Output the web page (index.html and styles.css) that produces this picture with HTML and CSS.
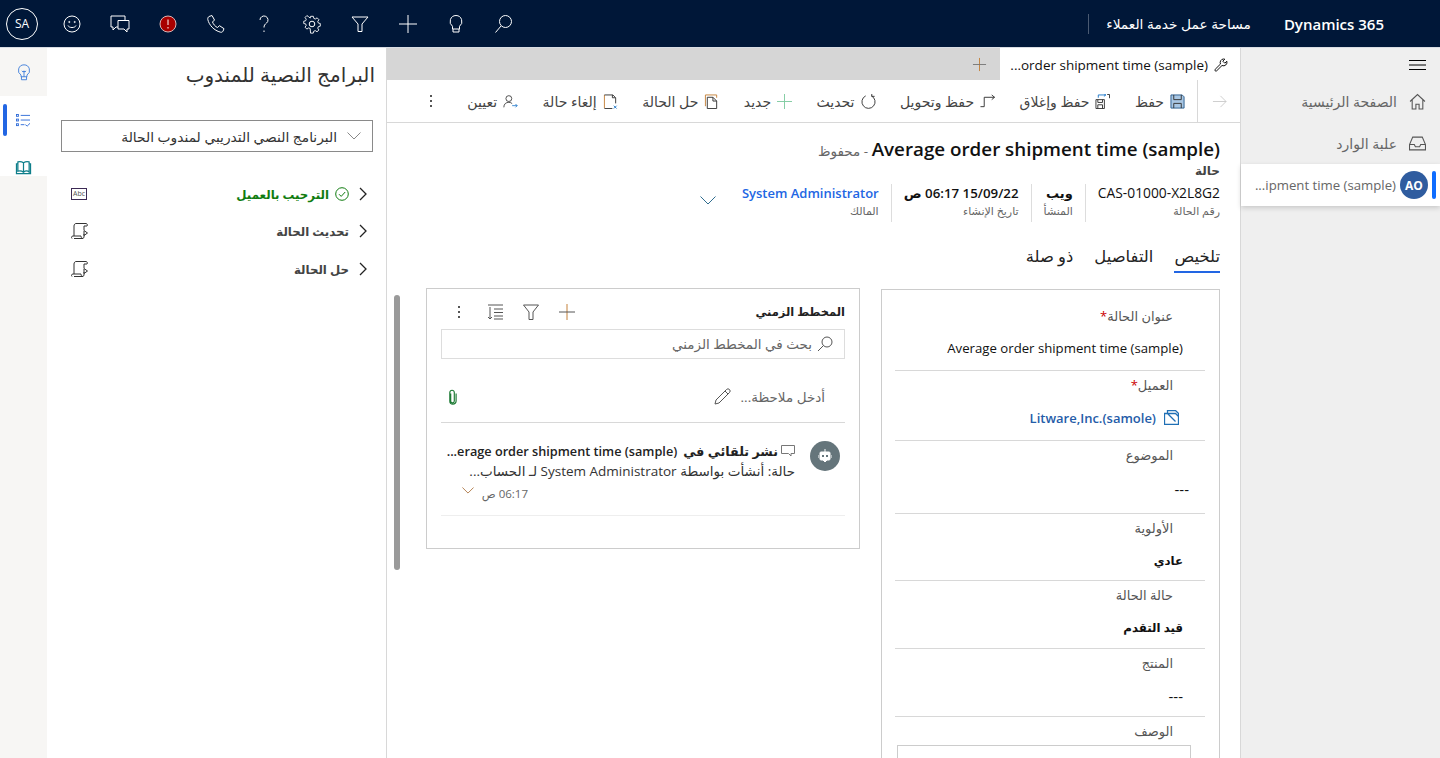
FILE: index.html
```html
<!DOCTYPE html>
<html lang="ar" dir="rtl">
<head>
    <meta charset="UTF-8">
    <title>Dynamics 365</title>
    <link rel="stylesheet" href="styles.css">
</head>
<body>
    <header class="topbar">
        <div class="brand">
            <svg class="waffle" viewBox="0 0 16 16" fill="#fff"><rect x="0" y="0" width="3" height="3"/><rect x="6.5" y="0" width="3" height="3"/><rect x="13" y="0" width="3" height="3"/><rect x="0" y="6.5" width="3" height="3"/><rect x="6.5" y="6.5" width="3" height="3"/><rect x="13" y="6.5" width="3" height="3"/><rect x="0" y="13" width="3" height="3"/><rect x="6.5" y="13" width="3" height="3"/><rect x="13" y="13" width="3" height="3"/></svg>
            <span class="brand-name" dir="ltr">Dynamics 365</span>
            <span class="brand-app">مساحة عمل خدمة العملاء</span>
        </div>
        <div class="top-icons">
            <button class="top-btn"><svg viewBox="0 0 20 20"><circle cx="11.5" cy="7.5" r="6"/><path d="M7 12 1.500 18.500"/></svg></button>
            <button class="top-btn"><svg viewBox="0 0 20 20"><path d="M10 1.500a6 6 0 0 0-3.500 10.800V15h7v-2.700A6 6 0 0 0 10 1.500zM7 15v3h6v-3"/></svg></button>
            <button class="top-btn"><svg viewBox="0 0 20 20"><path d="M10 1v18M1 10h18"/></svg></button>
            <button class="top-btn"><svg viewBox="0 0 20 20"><path d="M2 3h16l-6 7v7.500H8V10z"/></svg></button>
            <button class="top-btn"><svg viewBox="0 0 20 20"><circle cx="10" cy="10" r="2.800"/><path d="M8.500 2h3l.5 2.300 1.700.7 2-1.300 2 2.100-1.300 2 .7 1.700 2.100.5v3l-2.100.5-.7 1.700 1.300 2-2.100 2-2-1.300-1.700.7-.5 2.100h-3L8 15.600l-1.700-.7-2 1.300-2-2.100 1.300-2-.7-1.700L.8 10V7.500l2.100-.5.7-1.700-1.300-2 2-2.100 2 1.300L8 4z" transform="translate(1 .5) scale(.9)"/></svg></button>
            <button class="top-btn"><svg viewBox="0 0 20 20"><path d="M6 6a4 4 0 1 1 6.500 3.100c-1.500 1.200-2.500 2-2.500 4.400M10 16.500v1.500"/></svg></button>
            <button class="top-btn"><svg viewBox="0 0 20 20"><path d="M3 2.500 6 1.500l2.500 4.500-2 2c.7 2 2.800 4.700 5 5.500l2-1.800 4.500 3-1 2.500c-.5.800-1.500 1.300-2.500 1C8 16.500 3 11 1.800 5.500c-.2-1.300.3-2.400 1.200-3z"/></svg></button>
            <button class="top-btn"><svg viewBox="0 0 20 20"><circle class="alert-dot" cx="10" cy="10" r="8"/><path class="alert-mark" d="M10 5.500v5.500M10 13v1.500"/></svg></button>
            <button class="top-btn"><svg viewBox="0 0 20 20"><path d="M15 6V2H1v11h2v3l3-3h2M8 6.500h11V15h-2v3l-3-3H8z"/></svg></button>
            <button class="top-btn"><svg viewBox="0 0 20 20"><circle cx="10" cy="10" r="8"/><circle cx="7.300" cy="8" r=".6"/><circle cx="12.700" cy="8" r=".6"/><path d="M6 11.500c1 2.700 7 2.700 8 0"/></svg></button>
            <div class="me">SA</div>
        </div>
    </header>

    <div class="shell">
        <nav class="sitemap">
            <div class="hamburger"><svg viewBox="0 0 17 10"><path d="M0 .5h17M0 5h17M0 9.500h17"/></svg></div>
            <a class="site-item"><svg class="site-ico" viewBox="0 0 16 16"><path d="M1 8 8 1.500 15 8M3 6.500V15h3.500v-4.500h3V15H13V6.500"/></svg>الصفحة الرئيسية</a>
            <a class="site-item"><svg class="site-ico" viewBox="0 0 16 16"><path d="M3.500 2h9L15.500 9v5h-15V9zM.5 9h4.500l1 2h4l1-2h4.500"/></svg>علبة الوارد</a>
            <a class="site-item site-active"><span class="avatar">AO</span><span class="site-latin" dir="ltr">...ipment time (sample)</span></a>
        </nav>

        <main class="record">
            <div class="tabstrip">
                <div class="session-tab">
                    <svg class="wrench" viewBox="0 0 14 14"><path d="M9.500 1a3.500 3.500 0 0 0-3 5L1.200 11.300a1 1 0 0 0 1.500 1.500L8 7.500a3.500 3.500 0 0 0 4.800-4.300l-2 2-2-2 2-2c-.4-.1-.8-.2-1.300-.2z"/></svg>
                    <span dir="ltr">...order shipment time (sample)</span>
                </div>
                <svg class="tab-plus" viewBox="0 0 16 16"><path class="st-orange" d="M8 1v14"/><path d="M1 8h14"/></svg>
            </div>

            <div class="commandbar">
                <div class="cmd-back"><svg viewBox="0 0 16 16"><path d="M1 8h14M9 2l6 6-6 6"/></svg></div>
                <a class="cmd"><svg viewBox="0 0 16 16"><path class="save-body" d="M1 1h12l2 2v12H1z"/><path d="M4 1v5h8V1M4 15v-5h8v5"/></svg>حفظ</a>
                <a class="cmd"><svg viewBox="0 0 16 16"><path d="M1 6h9v9.500H1zM3 6v3h5V6M3 15.500v-4h5v4"/><path class="st-blue" d="M3.500 4V1h8M9.500-.5l2 1.500-2 1.500"/><path d="M13 .5h2.500v4"/></svg>حفظ وإغلاق</a>
                <a class="cmd"><svg viewBox="0 0 16 16"><path d="M.5 13.500h4V3.500h11M12.500 1l3 2.500-3 2.500"/></svg>حفظ وتحويل</a>
                <a class="cmd"><svg viewBox="0 0 16 16"><path d="M5 2a7 7 0 1 0 6 0M11.500 0v2.500h3"/></svg>تحديث</a>
                <a class="cmd"><svg viewBox="0 0 16 16"><path class="st-green" d="M8 0v16M0 8h16"/></svg>جديد</a>
                <a class="cmd"><svg viewBox="0 0 16 16"><path class="st-orange" d="M1.500 13V1h12v3"/><path d="M3.500 15.500V3.500h6l4 4v8zM9.500 3.500v4h4"/></svg>حل الحالة</a>
                <a class="cmd"><svg viewBox="0 0 16 16"><path class="st-orange" d="M1.500 1v14"/><path d="M1.500 1h9l3 3v6M13 4h-3V1M1.500 15.500h8.500"/><path class="st-blue" d="M11.500 12.500l3 3M14.500 12.500l-3 3"/></svg>إلغاء حالة</a>
                <a class="cmd"><svg viewBox="0 0 18 16"><circle cx="7" cy="4.500" r="3.500"/><path d="M1 15c0-4 2.500-6 6-6 1.500 0 3 .5 4 1.500"/><path class="st-blue" d="M11 13h6M15 11l2 2-2 2"/></svg>تعيين</a>
                <div class="cmd-more"><i></i><i></i><i></i></div>
            </div>

            <div class="record-body">
                <div class="record-head">
                    <h1 class="record-title">Average order shipment time (sample)<span class="saved"> - محفوظ</span></h1>
                    <div class="record-type">حالة</div>
                    <div class="head-fields">
                        <div class="head-field"><b class="ltr-val">CAS-01000-X2L8G2</b><small>رقم الحالة</small></div>
                        <div class="head-field"><b class="strong-val">ويب</b><small>المنشأ</small></div>
                        <div class="head-field"><b class="date-val">15/09/22 06:17 ص</b><small>تاريخ الإنشاء</small></div>
                        <div class="head-field head-owner"><b class="owner-val">System Administrator</b><small>المالك</small></div>
                        <svg class="head-chevron" viewBox="0 0 16 9"><path d="M.5.500 8 8 15.500.500"/></svg>
                    </div>
                    <div class="tabs">
                        <a class="tab tab-active">تلخيص</a>
                        <a class="tab">التفاصيل</a>
                        <a class="tab">ذو صلة</a>
                    </div>
                </div>

                <div class="columns">
                    <section class="form-card">
                        <div class="field field-first">
                            <label>عنوان الحالة<em>*</em></label>
                            <div class="value" dir="ltr">Average order shipment time (sample)</div>
                        </div>
                        <div class="field field-lookup">
                            <label>العميل<em>*</em></label>
                            <div class="value lookup"><svg viewBox="0 0 15 15"><path d="M.5 3.500h11l3 3v8H.5zM3.500 3.500V.5h8l3 3v3M3.500 3.500l8 8"/></svg><span dir="ltr">Litware,Inc.(samole)</span></div>
                        </div>
                        <div class="field field-empty">
                            <label>الموضوع</label>
                            <div class="value value-empty">---</div>
                        </div>
                        <div class="field field-short">
                            <label>الأولوية</label>
                            <div class="value value-bold">عادي</div>
                        </div>
                        <div class="field">
                            <label>حالة الحالة</label>
                            <div class="value value-bold">قيد التقدم</div>
                        </div>
                        <div class="field">
                            <label>المنتج</label>
                            <div class="value value-dash">---</div>
                        </div>
                        <div class="field field-last">
                            <label>الوصف</label>
                            <div class="textarea"></div>
                        </div>
                    </section>

                    <section class="timeline">
                        <div class="tl-head">
                            <h2>المخطط الزمني</h2>
                            <div class="tl-tools">
                                <svg viewBox="0 0 16 16"><path class="st-orange" d="M8 0v16"/><path d="M0 8h16"/></svg>
                                <svg viewBox="0 0 16 16"><path d="M.5 1h15L10 8v7.500H6V8z"/></svg>
                                <svg viewBox="0 0 16 16"><path d="M1 1h15M7 5h9M7 8.500h9M7 12h9M7 15h9M3 3v12M1 13l2 2 2-2"/></svg>
                                <div class="cmd-more"><i></i><i></i><i></i></div>
                            </div>
                        </div>
                        <div class="tl-search"><svg viewBox="0 0 16 16"><circle cx="10" cy="6" r="5"/><path d="M6.500 9.500 1 15"/></svg>بحث في المخطط الزمني</div>
                        <div class="tl-note">
                            <span>أدخل ملاحظة...</span>
                            <svg class="pencil" viewBox="0 0 17 17"><path d="M1 16l1-4L12.500 1.500a2 2 0 0 1 3 3L5 15zM11 3l3 3"/></svg>
                            <svg class="clip" viewBox="0 0 10 16"><path d="M3 4v8.500a2 2 0 0 0 4 0V3a2.500 2.500 0 0 0-5 0v9.500a3.500 3.500 0 0 0 7 0V4"/></svg>
                        </div>
                        <article class="post">
                            <div class="post-avatar"><svg viewBox="0 0 14 14"><path d="M7 0v3M0 6v3M14 6v3"/><path class="bot-face" d="M3 3h8a1 1 0 0 1 1 1v6a1 1 0 0 1-1 1H9l-2 2-2-2H3a1 1 0 0 1-1-1V4a1 1 0 0 1 1-1z"/><rect class="bot-eye" x="4" y="6" width="2" height="2"/><rect class="bot-eye" x="8" y="6" width="2" height="2"/></svg></div>
                            <div class="post-text">
                                <div class="post-title"><svg viewBox="0 0 14 12"><path d="M.5.500h13v8h-3.500v2.500l-2.500-2.500h-7z"/></svg>نشر تلقائي في <bdi dir="ltr">...erage order shipment time (sample)</bdi></div>
                                <div class="post-sub">حالة: أنشأت بواسطة System Administrator لـ الحساب...</div>
                                <div class="post-time"><span>06:17 ص</span><svg viewBox="0 0 14 8"><path d="M.5.500 7 7 13.500.500"/></svg></div>
                            </div>
                        </article>
                    </section>
                </div>
                <div class="scroll-thumb"></div>
            </div>
        </main>

        <aside class="scripts">
            <h2 class="scripts-title">البرامج النصية للمندوب</h2>
            <div class="select"><span>البرنامج النصي التدريبي لمندوب الحالة</span><svg viewBox="0 0 14 8"><path d="M.5.500 7 7 13.500.500"/></svg></div>
            <ul class="steps">
                <li class="step step-done">
                    <svg class="step-chev" viewBox="0 0 8 14"><path d="M1 1l6 6-6 6"/></svg>
                    <svg class="step-check" viewBox="0 0 14 14"><circle cx="7" cy="7" r="6.300"/><path d="M4 7.200 6.200 9.400 10.200 5"/></svg>
                    <span>الترحيب بالعميل</span>
                    <span class="abc" dir="ltr">Abc</span>
                </li>
                <li class="step">
                    <svg class="step-chev" viewBox="0 0 8 14"><path d="M1 1l6 6-6 6"/></svg>
                    <span>تحديث الحالة</span>
                    <svg class="scroll-ico" viewBox="0 0 17 16"><path d="M3 15.500h9a2 2 0 0 0 1-1.500v-3M1 15.500c-1-1-.5-2.500 1-2.500h8c0 1 .5 2.500 2 2.500M3 13V3c0-1.500 1-2.500 2-2.500h10a1.500 1.500 0 0 1 1 2.500h-3M13 3v4M13 7.500l3.500 2.500-3.500 2.500z"/></svg>
                </li>
                <li class="step">
                    <svg class="step-chev" viewBox="0 0 8 14"><path d="M1 1l6 6-6 6"/></svg>
                    <span>حل الحالة</span>
                    <svg class="scroll-ico" viewBox="0 0 17 16"><path d="M3 15.500h9a2 2 0 0 0 1-1.500v-3M1 15.500c-1-1-.5-2.500 1-2.500h8c0 1 .5 2.500 2 2.500M3 13V3c0-1.500 1-2.500 2-2.500h10a1.500 1.500 0 0 1 1 2.500h-3M13 3v4M13 7.500l3.500 2.500-3.500 2.500z"/></svg>
                </li>
            </ul>
        </aside>

        <div class="rail">
            <div class="rail-item"><svg class="rail-bulb" viewBox="0 0 16 20"><path d="M8 1a6.500 6.500 0 0 0-3.500 12V15h7v-2A6.500 6.500 0 0 0 8 1zM5 15v3.500h6V15M5.500 8l1.500 1.500L8 8l1 1.500L10.500 8M8 9v6"/></svg></div>
            <div class="rail-item rail-active"><svg class="rail-list" viewBox="0 0 16 14"><path d="M5 1.500h10M5 6.500h10M5 11.500h4M10 11.500l2 1.500 3-3"/><rect x="0.500" y="0.500" width="2" height="2"/><rect x="0.500" y="5.500" width="2" height="2"/><rect x="0.500" y="10.500" width="2" height="2"/></svg></div>
            <div class="rail-item rail-book"><svg class="rail-bookico" viewBox="0 0 16 16"><path d="M8 3C6 1.500 3.500 1.500 2 2v10c1.500-.5 4-.5 6 1 2-1.500 4.500-1.500 6 0V2c-1.500-.5-4-.5-6 1zM8 3v10M2 4H.5v10.500h15V4H14"/></svg></div>
        </div>
    </div>
</body>
</html>
```
FILE: styles.css
```css
* {
    box-sizing: border-box;
}
html, body {
    height: 100%;
}
body {
    margin: 0;
    overflow: hidden;
    font-family: "Open Sans", "Noto Sans", "DejaVu Sans", sans-serif;
    font-size: 13px;
    color: #333;
    background: #fff;
}
svg {
    fill: none;
    stroke: currentColor;
    stroke-width: 1;
    display: block;
    flex: none;
}
h1, h2 {
    margin: 0;
    font-weight: 400;
}

/* top bar */
.topbar {
    height: 48px;
    background: #001738;
    color: #fff;
    display: flex;
    align-items: center;
    justify-content: space-between;
    border-bottom: 1px solid #d8dce3;
}
.brand {
    display: flex;
    align-items: center;
    height: 100%;
}
.waffle {
    width: 16px;
    height: 16px;
    stroke: none;
    margin: 0 16px;
}
.brand-name {
    margin-right: 8px;
    font-size: 15px;
    font-weight: 600;
}
.brand-app {
    margin-right: 33px;
    padding-left: 17px;
    border-left: 1px solid #4a5a72;
    height: 20px;
    line-height: 20px;
    font-size: 13.750px;
}
.top-icons {
    display: flex;
    align-items: center;
}
.top-btn {
    width: 48px;
    height: 47px;
    padding: 0;
    background: none;
    border: 0;
    color: #fff;
    display: flex;
    align-items: center;
    justify-content: center;
}
.top-btn svg {
    width: 20px;
    height: 20px;
}
.alert-dot {
    fill: #a80000;
    stroke: #d8b8b8;
}
.me {
    width: 32px;
    height: 32px;
    margin-right: 10px;
    margin-left: 6px;
    border: 1px solid #fff;
    border-radius: 50%;
    font-size: 12px;
    display: flex;
    align-items: center;
    justify-content: center;
}

.shell {
    display: flex;
    height: calc(100% - 48px);
}

/* site map */
.sitemap {
    width: 200px;
    flex: none;
    background: #efefef;
    border-left: 1px solid #d8d8d8;
}
.hamburger {
    height: 32px;
    padding: 12px 14px 0 0;
    color: #000;
}
.hamburger svg {
    width: 17px;
    height: 10px;
}
.site-item {
    height: 42px;
    display: flex;
    align-items: center;
    gap: 12px;
    padding-right: 14px;
    color: #666;
    font-size: 14px;
}
.site-ico {
    width: 17px;
    height: 17px;
    color: #555;
}
.site-active {
    position: relative;
    background: #fff;
    box-shadow: 0 2px 5px rgba(0, 0, 0, 0.16);
    padding-right: 12px;
    gap: 4px;
}
.site-latin {
    font-size: 13.200px;
}
.site-active::before {
    content: "";
    position: absolute;
    right: 4px;
    top: 7px;
    width: 4px;
    height: 28px;
    border-radius: 2px;
    background: #0f6cff;
}
.avatar {
    width: 28px;
    height: 28px;
    border-radius: 50%;
    background: #2f5c9f;
    color: #fff;
    font-size: 12px;
    font-weight: 700;
    display: flex;
    align-items: center;
    justify-content: center;
}

/* main record */
.record {
    flex: 1;
    min-width: 0;
    display: flex;
    flex-direction: column;
}
.tabstrip {
    height: 32px;
    background: #d6d6d6;
    display: flex;
    align-items: center;
    flex: none;
}
.session-tab {
    width: 240px;
    height: 32px;
    background: #fff;
    display: flex;
    align-items: center;
    gap: 6px;
    padding: 1px 12px 0 0;
    color: #111;
    font-size: 13.500px;
}
.wrench {
    width: 14px;
    height: 14px;
}
.tab-plus {
    width: 15px;
    height: 15px;
    margin-right: 13px;
    color: #777;
}
.st-orange { stroke: #c4813a; }
.st-blue { stroke: #1f77c9; }
.st-green { stroke: #7fcba0; }

.commandbar {
    height: 43px;
    flex: none;
    border-bottom: 1px solid #d8d8d8;
    display: flex;
    align-items: center;
    gap: 24.500px;
    color: #444;
}
.cmd-back {
    width: 43px;
    height: 42px;
    border-left: 1px solid #d8d8d8;
    display: flex;
    align-items: center;
    justify-content: center;
    color: #ccc;
    margin-left: -12.500px;
}
.cmd-back svg {
    width: 15px;
    height: 15px;
}
.cmd {
    display: flex;
    align-items: center;
    gap: 6px;
    font-size: 14px;
    white-space: nowrap;
}
.cmd svg {
    width: 15px;
    height: 15px;
    color: #333;
}
.cmd + .cmd-more {
    margin-right: 4px;
}
.save-body {
    fill: #a9c7e4;
    stroke: #2b5d8f;
}
.cmd-more {
    display: flex;
    flex-direction: column;
    gap: 3px;
    width: 16px;
    align-items: center;
    color: #555;
}
.cmd-more i {
    width: 2px;
    height: 2px;
    background: #555;
}

.record-body {
    flex: 1;
    position: relative;
    overflow: hidden;
    padding: 0 20px 0 20px;
}
.record-title {
    margin-top: 13px;
    font-size: 18.800px;
    font-weight: 600;
    color: #111;
    line-height: 26px;
}
.saved {
    font-size: 13.500px;
    font-weight: 400;
    color: #666;
}
.record-type {
    font-size: 12px;
    font-weight: 700;
    color: #444;
    line-height: 14px;
}
.head-fields {
    display: flex;
    align-items: center;
    margin-top: 6px;
}
.head-field {
    display: flex;
    flex-direction: column;
    gap: 2px;
    height: 38px;
    padding: 0 0 0 12px;
    margin-left: 12px;
    border-left: 1px solid #ddd;
}
.head-field b {
    font-size: 13.800px;
    font-weight: 400;
    color: #111;
    line-height: 18px;
}
.head-field .strong-val {
    font-weight: 700;
    font-size: 13px;
}
.head-field .date-val {
    font-weight: 600;
    font-size: 13.300px;
}
.head-field .owner-val {
    color: #2266e3;
    font-weight: 600;
    font-size: 13px;
}
.head-field small {
    font-size: 11px;
    color: #666;
    line-height: 14px;
}
.head-owner {
    border-left: 0;
    margin-left: 0;
    padding-left: 0;
}
.head-chevron {
    width: 16px;
    height: 9px;
    margin-right: 26px;
    margin-bottom: 6px;
    color: #2f6d8f;
}
.tabs {
    display: flex;
    gap: 21px;
    margin-top: 23px;
}
.tab {
    font-size: 16.400px;
    color: #222;
    padding-bottom: 4px;
    border-bottom: 2px solid transparent;
    line-height: 22px;
}
.tab-active {
    border-bottom-color: #2266e3;
}

.columns {
    display: flex;
    align-items: flex-start;
    gap: 21px;
    margin-top: 15px;
}

/* form column */
.form-card {
    width: 339px;
    flex: none;
    border: 1px solid #ccc;
    padding: 0 14px 0 13px;
    margin-top: 1px;
}
.field {
    height: 68px;
    border-bottom: 1px solid #d8d8d8;
    padding-top: 4px;
}
.field label {
    display: block;
    height: 20px;
    line-height: 20px;
    padding-right: 32px;
    font-size: 13px;
    color: #555;
}
.field em {
    color: #c00;
    font-style: normal;
}
.field-first {
    height: 81px;
    padding-top: 16px;
}
.field-lookup {
    height: 70px;
}
.field-empty {
    height: 73px;
}
.field-short {
    height: 67px;
}
.field-last {
    border-bottom: 0;
}
.value {
    height: calc(100% - 20px);
    display: flex;
    align-items: center;
    margin-right: 22px;
    font-size: 13.200px;
    color: #111;
}
.value[dir="ltr"] {
    justify-content: flex-end;
}
.lookup {
    color: #255ca8;
    font-weight: 600;
    gap: 8px;
    margin-right: 26px;
    font-size: 13px;
}
.lookup svg {
    width: 15px;
    height: 15px;
    color: #1f6fb5;
    stroke-width: 1.300;
}
.value-empty {
    margin-right: 16px;
    font-size: 15px;
}
.value-dash {
    font-size: 15px;
    padding-top: 3px;
}
.value-bold {
    font-weight: 700;
    font-size: 11.800px;
    padding-top: 1px;
}
.textarea {
    height: 40px;
    margin: 4px 14px 0 2px;
    border: 1px solid #ccc;
}

/* timeline */
.timeline {
    width: 434px;
    height: 261px;
    flex: none;
    border: 1px solid #ccc;
    padding: 0 14px;
}
.tl-head {
    height: 40px;
    padding-top: 5px;
    display: flex;
    align-items: center;
    justify-content: space-between;
}
.tl-head h2 {
    font-size: 11.500px;
    font-weight: 700;
    color: #222;
}
.tl-tools {
    display: flex;
    align-items: center;
    gap: 20px;
    margin-left: 10px;
    color: #555;
}
.tl-tools svg {
    width: 16px;
    height: 16px;
}
.tl-search {
    height: 30px;
    border: 1px solid #ddd;
    display: flex;
    align-items: center;
    gap: 5px;
    padding-right: 11px;
    font-size: 13.500px;
    color: #666;
}
.tl-search svg {
    width: 16px;
    height: 16px;
    color: #555;
}
.tl-note {
    height: 64px;
    border-bottom: 1px solid #d8d8d8;
    display: flex;
    align-items: center;
    padding: 12px 20px 0 0;
    font-size: 13.500px;
    color: #666;
}
.pencil {
    width: 17px;
    height: 17px;
    margin-right: 10px;
    color: #555;
}
.clip {
    width: 9px;
    height: 16px;
    margin-right: auto;
    margin-left: 7px;
    color: #1d7a34;
    stroke-width: 1.300;
}
.post {
    display: flex;
    gap: 15px;
    height: 93px;
    padding: 18px 5px 0 0;
    border-bottom: 1px solid #eee;
}
.post-avatar {
    width: 30px;
    height: 30px;
    flex: none;
    border-radius: 50%;
    background: #65757b;
    color: #fff;
    display: flex;
    align-items: center;
    justify-content: center;
}
.post-avatar svg {
    width: 14px;
    height: 14px;
}
.bot-face {
    fill: #fff;
}
.bot-eye {
    fill: #65757b;
    stroke: none;
}
.post-text {
    min-width: 0;
    flex: 1;
    white-space: nowrap;
    overflow: hidden;
}
.post-title {
    display: flex;
    align-items: center;
    gap: 3px;
    margin-top: 1px;
    font-size: 12.700px;
    font-weight: 600;
    color: #222;
    line-height: 18px;
}
.post-title svg {
    width: 14px;
    height: 12px;
    color: #777;
}
.post-title bdi {
    margin-right: 3px;
}
.post-sub {
    font-size: 13.500px;
    color: #333;
    line-height: 23px;
}
.post-time {
    display: flex;
    align-items: center;
    gap: 8px;
    padding-right: 267px;
    margin-top: 3px;
    font-size: 11.500px;
    color: #666;
}
.post-time svg {
    width: 12px;
    height: 7px;
    margin-bottom: 6px;
    color: #a86f3a;
}
.scroll-thumb {
    position: absolute;
    left: 7px;
    top: 172px;
    width: 6px;
    height: 275px;
    border-radius: 3px;
    background: #9a9a9a;
}

/* agent scripts */
.scripts {
    width: 340px;
    flex: none;
    border-right: 1px solid #d8d8d8;
    padding: 14px 13px 0 14px;
}
.scripts-title {
    margin-right: -2px;
    font-size: 20px;
    line-height: 26px;
    color: #333;
}
.select {
    height: 32px;
    margin-top: 32px;
    border: 1px solid #8a8a8a;
    display: flex;
    align-items: center;
    flex-direction: row-reverse;
    justify-content: flex-end;
    gap: 10px;
    padding-right: 11px;
    font-size: 13.800px;
    color: #333;
}
.select svg {
    width: 14px;
    height: 8px;
    color: #888;
}
.steps {
    list-style: none;
    margin: 23px 0 0;
    padding: 0 6px 0 10px;
}
.step {
    height: 37.500px;
    display: flex;
    align-items: center;
    gap: 6px;
    font-size: 11.800px;
    font-weight: 700;
    color: #444;
}
.step-chev {
    width: 8px;
    height: 14px;
    color: #222;
    margin-left: 4px;
    stroke-width: 1.300;
}
.step-done {
    color: #107c10;
}
.step-check {
    width: 14px;
    height: 14px;
}
.abc, .scroll-ico {
    margin-right: auto;
}
.abc {
    width: 16px;
    height: 12px;
    border: 1px solid #3c2a55;
    font-size: 7px;
    font-weight: 400;
    line-height: 10px;
    text-align: center;
    color: #555;
}
.scroll-ico {
    width: 17px;
    height: 16px;
    color: #333;
}

/* left rail */
.rail {
    width: 47px;
    flex: none;
    background: #f7f6f4;
}
.rail-item {
    height: 48px;
    display: flex;
    align-items: center;
    justify-content: center;
    position: relative;
}
.rail-active {
    background: #fff;
}
.rail-active::before {
    content: "";
    position: absolute;
    left: 3px;
    top: 8px;
    width: 4px;
    height: 32px;
    border-radius: 2px;
    background: #2266e3;
}
.rail-book {
    height: 32px;
    padding-top: 16px;
    align-items: flex-start;
    background: #fff;
}
.rail-bulb {
    width: 14px;
    height: 17px;
    color: #2f74d8;
}
.rail-list {
    width: 15px;
    height: 13px;
    color: #2f6cd8;
}
.rail-bookico {
    width: 17px;
    height: 15px;
    color: #0e7e8a;
    stroke-width: 1.300;
}
```
